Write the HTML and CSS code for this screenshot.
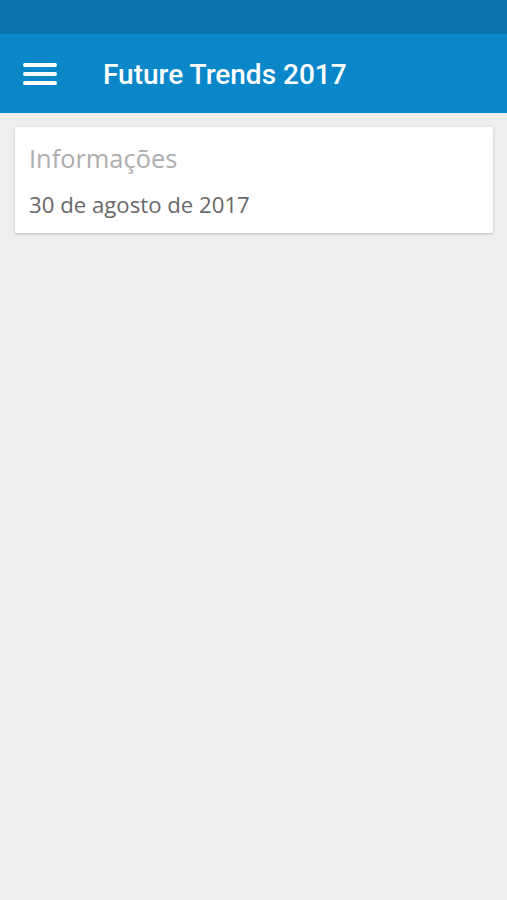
FILE: index.html
```html
<!DOCTYPE html>
<html lang="pt">
<head>
  <meta charset="UTF-8">
  <title>Future Trends 2017</title>
  <link rel="stylesheet" href="styles.css">
</head>
<body>
  <!-- status bar -->
  <div class="status-bar"></div>

  <!-- app bar -->
  <div class="app-bar">
    <button class="menu-button">
      <svg width="34" height="22" viewBox="0 0 34 22">
        <rect x="0" y="0" width="34" height="4" rx="2" fill="#fff"/>
        <rect x="0" y="9" width="34" height="4" rx="2" fill="#fff"/>
        <rect x="0" y="18" width="34" height="4" rx="2" fill="#fff"/>
      </svg>
    </button>
    <div class="app-title">Future Trends 2017</div>
  </div>

  <!-- content -->
  <div class="content">
    <div class="card">
      <div class="card-title">Informações</div>
      <div class="card-text">30 de agosto de 2017</div>
    </div>
  </div>
</body>
</html>
```

FILE: styles.css
```css
html, body {
  margin: 0;
  padding: 0;
  height: 100%;
}

body {
  background: #eeeeee;
  font-family: "Open Sans", sans-serif;
}

.status-bar {
  height: 34px;
  background: #0b73ad;
}

/* app bar */
.app-bar {
  height: 79px;
  background: #0a87c9;
  display: flex;
  align-items: center;
  padding-left: 23px;
  box-sizing: border-box;
}

.menu-button {
  padding: 0;
  border: none;
  background: none;
  width: 34px;
  height: 22px;
  display: flex;
}

.app-title {
  margin-left: 46px;
  margin-top: 2px;
  color: #fff;
  font-family: Roboto, sans-serif;
  font-weight: 500;
  font-size: 28px;
}

.content {
  padding: 14px 14px 0 15px;
}

.card {
  background: #fff;
  box-shadow: 0 1px 3px rgba(0, 0, 0, 0.22);
  border-radius: 2px;
  padding: 15px 14px 13px;
}

.card-title {
  color: #adadad;
  font-size: 25.4px;
  line-height: 32px;
}

.card-text {
  color: #686868;
  font-size: 22.2px;
  line-height: 30px;
  margin-top: 16px;
}
```
